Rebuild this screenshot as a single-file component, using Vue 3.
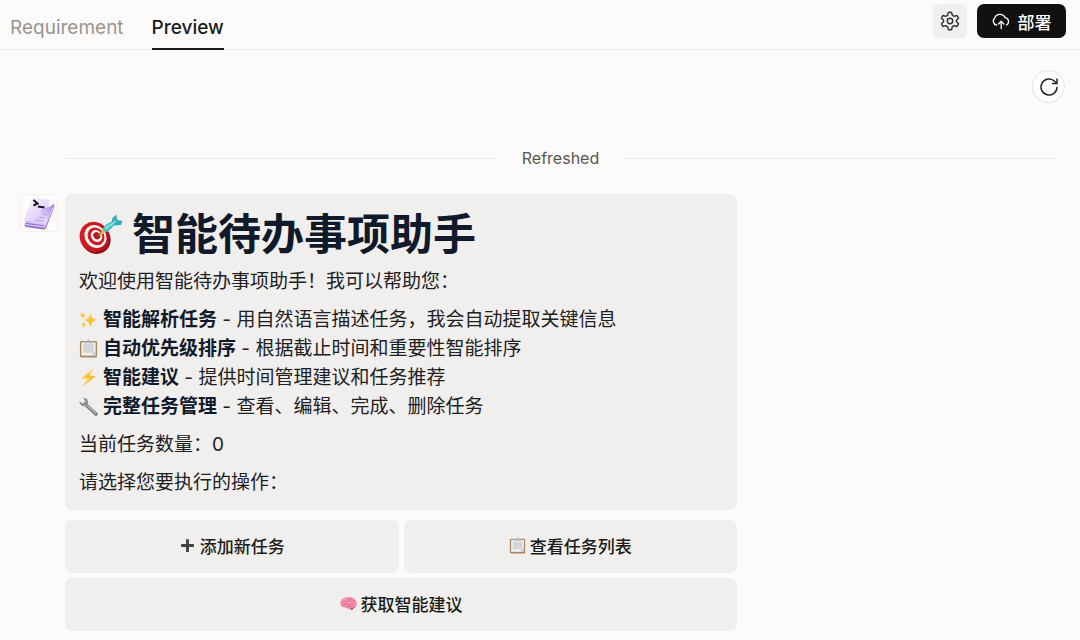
<template>
  <div class="preview-page">
    <svg class="sprite" aria-hidden="true">
      <defs>
        <linearGradient id="dart-red" x1="0" y1="0" x2="1" y2="1">
          <stop offset="0" stop-color="#da2228" />
          <stop offset="1" stop-color="#b00f18" />
        </linearGradient>
        <linearGradient id="spark-gold" x1="0" y1="0" x2="0" y2="1">
          <stop offset="0" stop-color="#ffd75a" />
          <stop offset="1" stop-color="#f8b62c" />
        </linearGradient>
        <linearGradient id="page-lilac" x1="0" y1="0" x2="1" y2="1">
          <stop offset="0" stop-color="#f8f4fd" />
          <stop offset="1" stop-color="#d5c3f4" />
        </linearGradient>
        <linearGradient id="curl-lilac" x1="0" y1="1" x2="1" y2="0">
          <stop offset="0" stop-color="#cdb8f3" />
          <stop offset="0.5" stop-color="#e2d5f8" />
          <stop offset="1" stop-color="#9d7bdc" />
        </linearGradient>
      </defs>
      <symbol id="icon-target" viewBox="0 0 44 44">
        <ellipse cx="16.5" cy="26.5" rx="14.500" ry="16" transform="rotate(-38 16.5 26.5)" fill="#8e0d14" />
        <ellipse cx="15.5" cy="25" rx="14.500" ry="15.500" transform="rotate(-38 15.5 25)" fill="url(#dart-red)" />
        <ellipse cx="16.5" cy="24.500" rx="10.500" ry="12" transform="rotate(-38 16.5 24.5)" fill="#fbf4f2" />
        <ellipse cx="17" cy="24.300" rx="8" ry="9.300" transform="rotate(-38 17 24.3)" fill="#cf1b22" />
        <ellipse cx="17.500" cy="24" rx="5.400" ry="6.300" transform="rotate(-38 17.5 24)" fill="#fbf4f2" />
        <ellipse cx="17.800" cy="23.800" rx="3.200" ry="3.800" transform="rotate(-38 17.8 23.8)" fill="#bd141b" />
        <path d="M18 24 23 20.500" stroke="#8a6a2a" stroke-width="1.500" />
        <path d="M21.500 21 24 17 27 19.500 23 22.500Z" fill="#e9b93c" />
        <path d="M23.500 17Q27 11 33.500 9.500L35.500 12Q32.500 18 26.500 20.500Z" fill="#4cc2cc" />
        <path d="M32.500 10.500 33.500 6 37 2.500 38.500 8 43.500 9 42 13 35 13.500Z" fill="#36aab8" />
        <path d="M26.500 16.500 37 9" stroke="#a5edf0" stroke-width="1.500" />
      </symbol>
      <symbol id="icon-sparkles" viewBox="0 0 20 20">
        <path d="M12 3Q12.700 9.300 19 10.500 12.700 11.700 12 18 11.300 11.700 5 10.500 11.300 9.300 12 3Z" fill="url(#spark-gold)" />
        <path d="M4 2Q4.500 5 7 5.500 4.500 6 4 9 3.500 6 1 5.500 3.500 5 4 2Z" fill="#fac541" />
        <path d="M5 12Q5.500 15 8 15.500 5.500 16 5 19 4.500 16 2 15.500 4.500 15 5 12Z" fill="#fac541" />
      </symbol>
      <symbol id="icon-clipboard" viewBox="0 0 20 20">
        <rect x="1" y="2" width="18" height="17.500" rx="1.500" fill="#a98860" />
        <rect x="2.500" y="3.500" width="15" height="14" fill="#f0f0f1" />
        <rect x="4.500" y="5.500" width="11" height="9" fill="#d3d4d6" />
        <path d="M12.500 17.500 17.500 12.500V17.500Z" fill="#c9cacc" />
        <path d="M5.500 4.500V2.500H8Q8.500 .5 10 .5T12 2.500H14.500V4.500Z" fill="#b4b7ba" />
      </symbol>
      <symbol id="icon-bolt" viewBox="0 0 20 20">
        <path d="M15 .5 2.500 11 9 11.700 4 19.500 17.800 8.500 11 8Z" fill="#fbbd2e" />
        <path d="M13.300 2.800 4.500 10.300 10.500 11 7.500 15.800" fill="none" stroke="#ffda63" />
      </symbol>
      <symbol id="icon-wrench" viewBox="0 0 20 20">
        <path d="M7.500 8.500 17.800 18" stroke="#687076" stroke-width="3.600" stroke-linecap="round" />
        <path d="M7.500 8 17.300 17" stroke="#a9b0b6" stroke-width="2" stroke-linecap="round" />
        <path d="M4.300 1Q8 .5 9.200 3.200 10.400 6.500 8.700 8.800 6 10.500 3 9.200 .3 8 .3 4.500L4 6.800 6.600 4.500Z" fill="#8b949a" />
      </symbol>
      <symbol id="icon-plus" viewBox="0 0 20 20">
        <path d="M10 2.500V17.500M2.500 10H17.500" stroke="#414141" stroke-width="3.400" />
      </symbol>
      <symbol id="icon-brain" viewBox="0 0 20 20">
        <path d="M.5 10Q0 6 3.500 4.500 6 2 10 2.500 14 2 16.500 4.500 20 6.500 19.500 10.500 20 14 16.500 15L14 18 11 15.800Q8 16.800 6.500 14.800 1 15.300 .5 10Z" fill="#f08ba8" />
        <path d="M11 15.500Q15 16 18.500 13.500 17.500 15.500 16 15.500L14 18Z" fill="#b95072" />
        <path d="M3 9Q4 6.500 7 7.500M6 5Q9 4 10 6.500T14 7M12 4.500Q15 4.500 16 7M4 11.500Q7 9 9 11T14 10.500 18 10.500M8 13.500Q10 12 13 13.500" fill="none" stroke="#d3668a" stroke-width=".8" />
        <path d="M4 6.500Q6 4.500 8 4.500M10 9Q12 8 13 9" fill="none" stroke="#fbb6ca" />
      </symbol>
    </svg>

    <header class="topbar">
      <nav class="tabs">
        <a
          v-for="tab in tabs"
          :key="tab"
          href="#"
          class="tab"
          :class="{ active: tab === activeTab }"
          @click.prevent="activeTab = tab"
        >{{ tab }}</a>
      </nav>
      <div class="actions">
        <button type="button" class="settings-btn" aria-label="设置">
          <svg width="20" height="20" viewBox="0 0 20 20" fill="none" stroke="#30302e" stroke-width="1.400" stroke-linejoin="round">
            <path d="M8.400 1.500Q10 .9 11.600 1.500L12.300 4.200 14.200 5.300 16.900 4.500Q18.200 5.700 18.500 7.300L16.500 9.200V10.800L18.500 12.700Q18.200 14.300 16.900 15.500L14.200 14.700 12.300 15.800 11.600 18.500Q10 19.100 8.400 18.500L7.700 15.800 5.800 14.700 3.100 15.500Q1.800 14.300 1.500 12.700L3.500 10.800V9.200L1.500 7.300Q1.800 5.700 3.100 4.500L5.800 5.300 7.700 4.200Z" />
            <circle cx="10" cy="10" r="2.700" />
          </svg>
        </button>
        <button type="button" class="deploy-btn">
          <svg width="18" height="18" viewBox="0 0 18 18" fill="none" stroke="#fff" stroke-width="1.300" stroke-linecap="round" stroke-linejoin="round">
            <path d="M4.500 13A4 4 0 0 1 2.500 6.200 5.800 5.800 0 0 1 13.200 5.700 3.900 3.900 0 0 1 14.500 13" />
            <path d="M9.200 16.500V9.500M6.500 12 9.200 9.300 11.900 12" />
          </svg>
          <span>部署</span>
        </button>
      </div>
    </header>

    <main class="chat">
      <div class="toolbar">
        <button type="button" class="refresh-btn" aria-label="刷新">
          <svg width="20" height="20" viewBox="0 0 20 20" fill="none" stroke="#252525" stroke-width="1.500">
            <path d="M18 10A8 8 0 1 1 15.600 4.300L18 6.500" />
            <path d="M18 1.500V6.500H13" />
          </svg>
        </button>
      </div>

      <div class="divider"><span>Refreshed</span></div>

      <div class="message">
        <div class="avatar">
          <svg width="36" height="36" viewBox="0 0 36 36" aria-hidden="true">
            <path d="M3.500 29.500 6 26 24 29 32 9 33.500 12 25 33Q24.500 34.500 22.500 34.500L5.500 32Q3.500 31.500 3.500 29.500Z" fill="#8f6dcb" />
            <path d="M4.500 29.500 23.500 32 32.500 12" fill="none" stroke="#e6daf8" stroke-width="1.200" />
            <path d="M11 4Q11.500 2.500 13 2.700L28 5Q29 5.300 28.700 6.500L21 27 4.500 26Q2.500 25.500 3.200 24Z" fill="url(#page-lilac)" />
            <path d="M4 26.500Q13 27 16 21.500 19 14.500 26 12.500 31 11 33 8L24.500 29Q23.500 30.500 21.500 30L6 28Q4 27.500 4 26.500Z" fill="url(#curl-lilac)" />
            <path d="M15 25 22.500 26M18 22 24 23M20.500 19 25.500 20" stroke="#b79be6" />
            <path d="M12.500 5 16.500 8.500 12.500 10.500M17 11.500 23.500 12.500" fill="none" stroke="#171419" stroke-width="2" />
          </svg>
        </div>
        <div class="content">
          <section class="bubble">
            <h1>
              <svg class="title-icon" aria-hidden="true"><use href="#icon-target" /></svg>
              <span>智能待办事项助手</span>
            </h1>
            <p>欢迎使用智能待办事项助手！我可以帮助您：</p>
            <ul>
              <li v-for="item in features" :key="item.name">
                <svg class="emoji" aria-hidden="true"><use :href="'#icon-' + item.icon" /></svg>
                <span><strong>{{ item.name }}</strong> - {{ item.text }}</span>
              </li>
            </ul>
            <p>当前任务数量：{{ taskCount }}</p>
            <p>请选择您要执行的操作：</p>
          </section>
          <div class="options">
            <button
              v-for="option in options"
              :key="option.label"
              type="button"
              class="option"
              :class="{ wide: option.wide }"
            >
              <svg aria-hidden="true"><use :href="'#icon-' + option.icon" /></svg>
              <span>{{ option.label }}</span>
            </button>
          </div>
        </div>
      </div>
    </main>
  </div>
</template>

<script setup>
import { ref } from 'vue';

const tabs = ['Requirement', 'Preview'];
const activeTab = ref('Preview');
const taskCount = ref(0);

const features = [
  { icon: 'sparkles', name: '智能解析任务', text: '用自然语言描述任务，我会自动提取关键信息' },
  { icon: 'clipboard', name: '自动优先级排序', text: '根据截止时间和重要性智能排序' },
  { icon: 'bolt', name: '智能建议', text: '提供时间管理建议和任务推荐' },
  { icon: 'wrench', name: '完整任务管理', text: '查看、编辑、完成、删除任务' },
];

const options = [
  { icon: 'plus', label: '添加新任务' },
  { icon: 'clipboard', label: '查看任务列表' },
  { icon: 'brain', label: '获取智能建议', wide: true },
];
</script>

<style>
body { background: #fcfbf9; }
</style>

<style scoped>
.preview-page { min-height: 100vh; background: #fcfbf9; color: #20201e; font-family: Inter, "Noto Sans CJK SC", sans-serif; }
.preview-page * { box-sizing: border-box; }
.sprite { position: absolute; width: 0; height: 0; }
button { border: 0; padding: 0; font-family: inherit; cursor: pointer; }
svg { flex: none; }

.topbar { display: flex; justify-content: space-between; height: 50px; padding: 0 14px 0 10px; border-bottom: 1px solid #ebeae8; }
.tabs { display: flex; gap: 28px; }
.tab { height: 50px; padding-top: 4px; border-bottom: 2px solid transparent; color: #99958f; font-size: 19px; line-height: 48px; text-decoration: none; }
.tab.active { color: #1b1b19; border-color: #1b1b19; font-weight: 500; }
.actions { display: flex; gap: 10px; padding-top: 4px; }
.settings-btn { display: grid; place-items: center; width: 34px; height: 34px; border-radius: 6px; background: #f0efed; }
.deploy-btn { display: flex; align-items: center; justify-content: center; gap: 8px; width: 89px; height: 34px; border-radius: 7px; background: #11110f; color: #fff; font-size: 17px; font-weight: 500; }

.toolbar { display: flex; justify-content: flex-end; padding: 20px 15px 0; }
.refresh-btn { display: grid; place-items: center; width: 33px; height: 33px; border: 1px solid #e4e3e1; border-radius: 50%; background: #fff; }

.divider { display: flex; align-items: center; gap: 24px; margin: 43px 24px 24px 65px; color: #575653; font-size: 16px; line-height: 24px; }
.divider::before, .divider::after { content: ""; flex: 1; height: 1px; background: #ebeae8; }

.message { display: flex; align-items: flex-start; gap: 7px; padding: 0 20px 10px; }
.avatar { display: grid; place-items: center; flex: none; width: 38px; height: 38px; border: 1px solid #f1f0ee; border-radius: 5px; background: #fdfcfb; }
.content { flex: 1; max-width: 672px; }
.bubble { display: flex; flex-direction: column; gap: 9px; padding: 14px 14px 13px; border-radius: 7px; background: #f0efed; font-size: 19px; line-height: 29px; }
.bubble h1 { display: flex; align-items: center; gap: 9px; margin: 0; padding-top: 2px; color: #111a2b; font-size: 43px; font-weight: 700; line-height: 48px; }
.title-icon { width: 44px; height: 44px; }
.bubble p { margin: 0; }
.bubble ul { margin: 0; padding: 0; list-style: none; }
.bubble li { display: flex; align-items: center; gap: 5px; }
.bubble strong { color: #111a2b; font-weight: 700; }
.emoji { width: 19px; height: 19px; }
.options { display: grid; grid-template-columns: 1fr 1fr; gap: 5px; margin-top: 10px; }
.option { display: flex; align-items: center; justify-content: center; gap: 4px; height: 53px; padding-bottom: 2px; border-radius: 7px; background: #f0efed; color: #1b1b19; font-size: 17px; font-weight: 500; }
.option svg { width: 17px; height: 17px; }
.option.wide { grid-column: 1 / -1; }
</style>
